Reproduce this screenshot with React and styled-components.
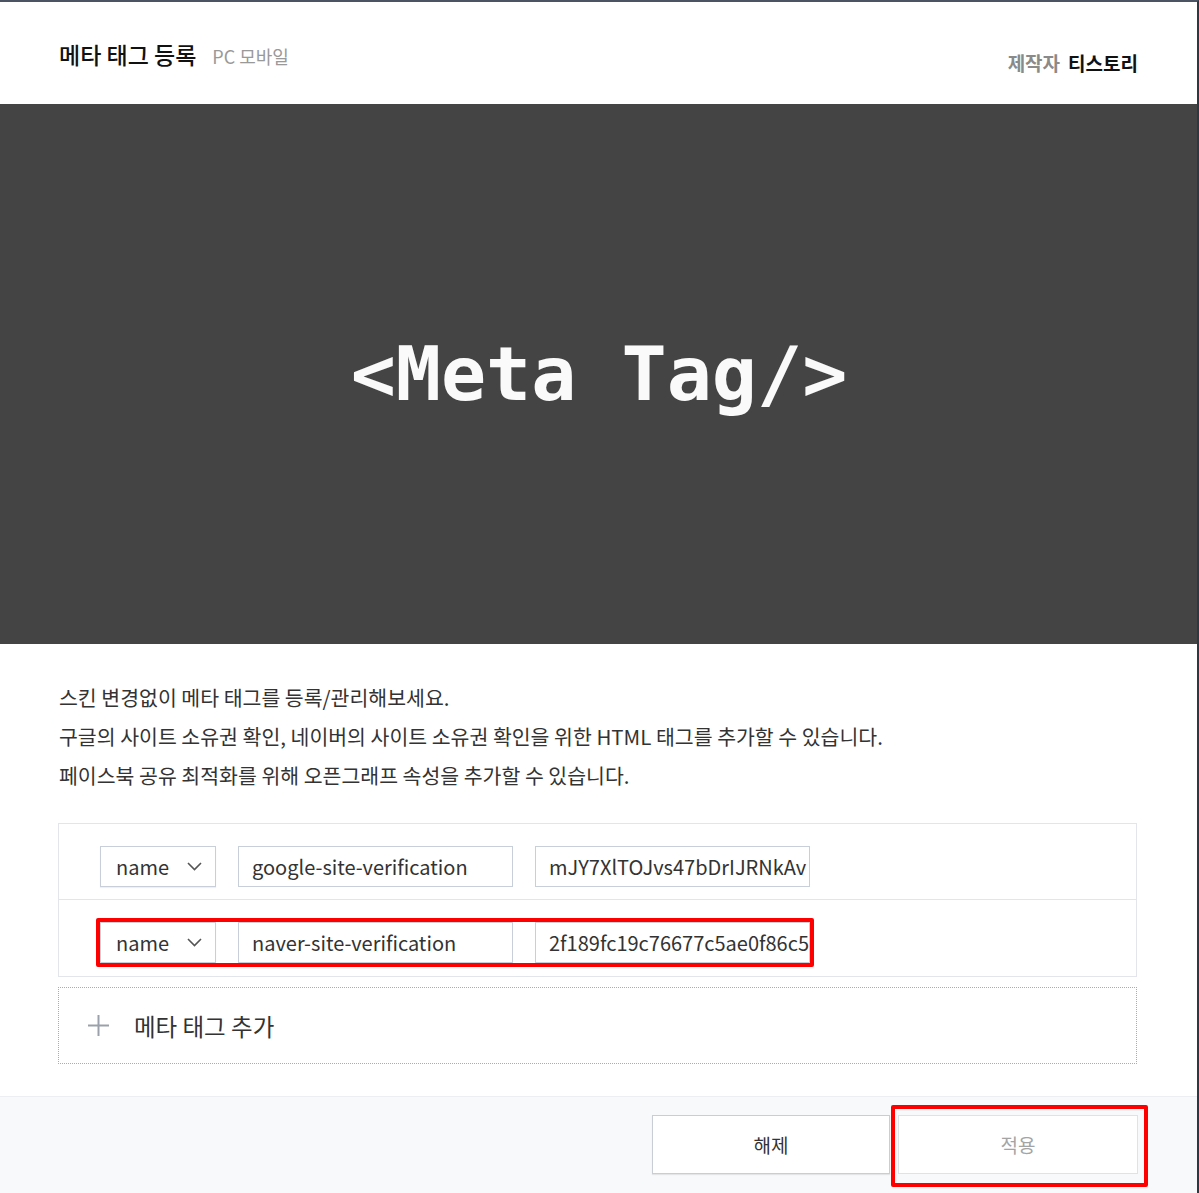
import React from "react";
import styled, { createGlobalStyle } from "styled-components";

const Global = createGlobalStyle`
  html, body { margin: 0; padding: 0; background: #ffffff; }
  body { font-family: "Noto Sans CJK KR", "Noto Sans", sans-serif; color: #333; }
  * { box-sizing: border-box; }
`;

const Frame = styled.div`
  position: relative;
  width: 1199px;
  height: 1193px;
  border-top: 2px solid #4a5462;
  border-right: 2px solid #2e3842;
  display: flex;
  flex-direction: column;
  overflow: hidden;
  background: #fff;
`;

const TopAccent = styled.div`
  position: absolute;
  top: -2px;
  left: 6px;
  width: 63px;
  height: 2px;
  background: #1c242e;
`;

const Header = styled.header`
  height: 102px;
  display: flex;
  justify-content: space-between;
  align-items: flex-start;
  padding: 0 59px 0 59px;
`;

const TitleGroup = styled.div`
  display: flex;
  align-items: baseline;
  gap: 16px;
  padding-top: 35px;
`;

const Title = styled.h1`
  margin: 0;
  font-size: 23px;
  font-weight: 500;
  color: #111;
`;

const Sub = styled.span`
  font-size: 18px;
  color: #999;
`;

const Maker = styled.div`
  padding-top: 47px;
  font-size: 19px;
  font-weight: 700;
  display: flex;
  gap: 8px;
`;

const MakerLabel = styled.span`
  color: #8a8a8a;
`;

const MakerName = styled.span`
  color: #111;
`;

const Banner = styled.div`
  height: 540px;
  background: #444444;
  display: flex;
  align-items: center;
  justify-content: center;
`;

const BannerText = styled.div`
  font-family: "DejaVu Sans Mono", monospace;
  font-weight: 700;
  font-size: 75px;
  color: #fafafa;
  white-space: pre;
  padding-left: 1px;
`;

const Body = styled.div`
  flex: 1;
  padding: 34px 60px 0 58px;
`;

const Desc = styled.p`
  margin: 0 0 0 1px;
  font-size: 20.5px;
  line-height: 39px;
  color: #333;
`;

const TagList = styled.div`
  margin-top: 28px;
  border: 1px solid #e2e5eb;
`;

const TagRow = styled.div`
  position: relative;
  display: flex;
  align-items: center;
  gap: 22px;
  padding: 22px 0 12px 41px;
  & + & {
    border-top: 1px solid #e2e5eb;
    padding-bottom: 13px;
  }
`;

const Select = styled.div`
  width: 116px;
  height: 41px;
  border: 1px solid #c9cfd8;
  background: #fff;
  box-shadow: 0 1px 1px rgba(0, 0, 0, 0.06);
  display: flex;
  align-items: center;
  justify-content: space-between;
  padding: 0 13px 0 15px;
  font-size: 20px;
  color: #333;
`;

const Field = styled.div`
  width: 275px;
  height: 41px;
  border: 1px solid #c9cfd8;
  background: #fff;
  display: flex;
  align-items: center;
  padding-left: 13px;
  font-size: 20px;
  color: #333;
  white-space: nowrap;
  overflow: hidden;
`;

const Highlight = styled.div`
  position: absolute;
  border: 4px solid #ff0000;
  border-radius: 2px;
  pointer-events: none;
`;

const AddButton = styled.div`
  margin-top: 10px;
  height: 77px;
  border: 1px dotted #a9adb3;
  display: flex;
  align-items: center;
  gap: 25px;
  padding-left: 29px;
  font-size: 23.5px;
  color: #333;
`;

const Footer = styled.footer`
  position: relative;
  height: 97px;
  background: #f8f9fb;
  border-top: 1px solid #eceef2;
  display: flex;
  justify-content: flex-end;
  align-items: flex-start;
  gap: 8px;
  padding: 18px 59px 0 0;
`;

const Button = styled.button`
  width: ${(p) => p.$w}px;
  height: 59px;
  background: #fff;
  border: 1px solid ${(p) => (p.$disabled ? "#dfe3e9" : "#c9ced6")};
  box-shadow: ${(p) => (p.$disabled ? "none" : "0 1px 1px rgba(0,0,0,0.08)")};
  font-family: "Noto Sans CJK KR", sans-serif;
  font-size: 19px;
  color: ${(p) => (p.$disabled ? "#a4a4a4" : "#333")};
  padding: 0;
`;

const Chevron = () => (
  <svg width="15" height="9" viewBox="0 0 15 9" fill="none">
    <path d="M1 1l6.5 6.5L14 1" stroke="#555" strokeWidth="1.6" />
  </svg>
);

const Plus = () => (
  <svg width="21" height="21" viewBox="0 0 21 21">
    <path d="M10.5 0v21M0 10.5h21" stroke="#9ba1ab" strokeWidth="2" />
  </svg>
);

export default function App() {
  return (
    <>
      <Global />
      <Frame>
        <TopAccent />
        <Header>
          <TitleGroup>
            <Title>메타 태그 등록</Title>
            <Sub>PC 모바일</Sub>
          </TitleGroup>
          <Maker>
            <MakerLabel>제작자</MakerLabel>
            <MakerName>티스토리</MakerName>
          </Maker>
        </Header>
        <Banner>
          <BannerText>{"<Meta Tag/>"}</BannerText>
        </Banner>
        <Body>
          <Desc>
            스킨 변경없이 메타 태그를 등록/관리해보세요.
            <br />
            구글의 사이트 소유권 확인, 네이버의 사이트 소유권 확인을 위한 HTML 태그를 추가할 수 있습니다.
            <br />
            페이스북 공유 최적화를 위해 오픈그래프 속성을 추가할 수 있습니다.
          </Desc>
          <TagList>
            <TagRow>
              <Select>
                name <Chevron />
              </Select>
              <Field>google-site-verification</Field>
              <Field>mJY7XlTOJvs47bDrIJRNkAv</Field>
            </TagRow>
            <TagRow>
              <Select>
                name <Chevron />
              </Select>
              <Field>naver-site-verification</Field>
              <Field>2f189fc19c76677c5ae0f86c5</Field>
              <Highlight style={{ left: 37, top: 18, width: 718, height: 49 }} />
            </TagRow>
          </TagList>
          <AddButton>
            <Plus />
            <span>메타 태그 추가</span>
          </AddButton>
        </Body>
        <Footer>
          <Button $w={238}>해제</Button>
          <Button $w={240} $disabled>
            적용
          </Button>
          <Highlight style={{ left: 891, top: 8, width: 257, height: 82 }} />
        </Footer>
      </Frame>
    </>
  );
}
